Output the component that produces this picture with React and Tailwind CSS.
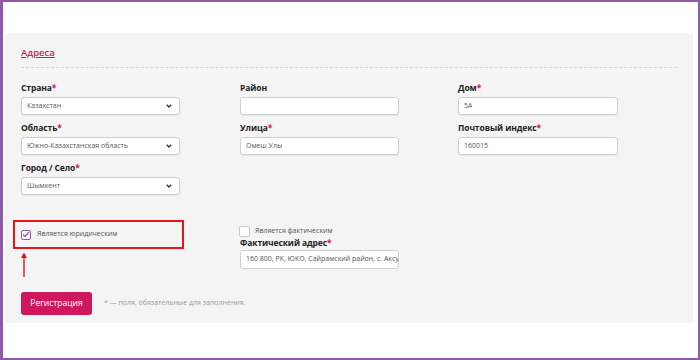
import React from 'react';

const Star = () => <span className="text-[#d4145a]">*</span>;

function Label({ children, req, className = '' }) {
    return (
        <div className={`h-[16px] leading-[16px] text-[8.5px] font-bold text-[#222] tracking-[-0.1px] ${className}`}>
            {children}
            {req && <Star />}
        </div>
    );
}

function Field({ label, req, value, select }) {
    return (
        <div className="mb-[5px]">
            <Label req={req}>{label}</Label>
            <div className="mt-[1px] h-[18px] bg-white border border-[#cfcfcf] rounded-[3px] flex items-center justify-between pl-[5px] pr-[7px] text-[7px] text-[#555] shadow-[0_1px_1px_rgba(0,0,0,0.06)]">
                <span className="whitespace-nowrap overflow-hidden">{value}</span>
                {select && (
                    <svg width="6" height="4" viewBox="0 0 6 4" className="shrink-0">
                        <path d="M0.8 0.8 L3 3 L5.2 0.8" fill="none" stroke="#333" strokeWidth="1.4" />
                    </svg>
                )}
            </div>
        </div>
    );
}

export default function App() {
    return (
        <div className="w-[700px] h-[360px] bg-white border-[2px] border-l-[3px] border-[#8d5aa5] pt-[31px] pl-[2px] pr-[5px] font-['Open_Sans',sans-serif]">
            <div className="h-[290px] bg-[#f4f4f4] pl-[16px] pr-[16px] pt-[12px]">
                <div className="text-[9.5px] font-semibold text-[#d4145a] underline leading-[16px]">Адреса</div>
                <div className="mt-[6px] border-t border-dashed border-[#d2d2d2]" />

                <div className="mt-[12px] flex">
                    <div className="w-[159px]">
                        <Field label="Страна" req value="Казахстан" select />
                        <Field label="Область" req value="Южно-Казахстанская область" select />
                        <Field label="Город / Село" req value="Шымкент" select />
                    </div>
                    <div className="w-[159px] ml-[60px]">
                        <Field label="Район" value="" />
                        <Field label="Улица" req value="Омеш Улы" />
                    </div>
                    <div className="w-[160px] ml-[59px]">
                        <Field label="Дом" req value="5А" />
                        <Field label="Почтовый индекс" req value="160015" />
                    </div>
                </div>

                <div className="mt-[20px] flex">
                    <div className="w-[159px]">
                        <div className="-ml-[8px] w-[171px] h-[29px] border-2 border-[#e8141c] flex items-center pl-[6px] gap-[6px]">
                            <span className="w-[10px] h-[10px] border border-[#8d5aa5] rounded-[2px] bg-white flex items-center justify-center">
                                <svg width="8" height="7" viewBox="0 0 8 7">
                                    <path d="M1 3.5 L3 5.5 L7 1" fill="none" stroke="#8d5aa5" strokeWidth="1.3" />
                                </svg>
                            </span>
                            <span className="text-[7px] text-[#555]">Является юридическим</span>
                        </div>
                        <svg width="10" height="26" viewBox="0 0 10 26" className="mt-[3px] ml-[-2px]">
                            <path d="M5 4 L5 25" stroke="#e8141c" strokeWidth="1.4" />
                            <path d="M2 6 L5 0.5 L8 6 Z" fill="#e8141c" />
                        </svg>
                    </div>
                    <div className="w-[159px] ml-[60px] pt-[6px]">
                        <div className="flex items-center gap-[5px] h-[11px] -ml-[1px]">
                            <span className="w-[11px] h-[11px] border border-[#c8c8c8] rounded-[2px] bg-white" />
                            <span className="text-[7px] text-[#555]">Является фактическим</span>
                        </div>
                        <Label req className="!h-[12px] !leading-[12px]">Фактический адрес</Label>
                        <div className="mt-[1px] h-[19px] bg-white border border-[#cfcfcf] rounded-[3px] flex items-center pl-[5px] text-[7px] text-[#555] whitespace-nowrap overflow-hidden">
                            160 800, РК, ЮКО, Сайрамский район, с. Аксу
                        </div>
                    </div>
                </div>

                <div className="mt-[14px] flex items-center">
                    <button className="w-[71px] h-[23px] bg-[#cf175e] text-white text-[8.5px] rounded-[3px]">
                        Регистрация
                    </button>
                    <span className="ml-[12px] text-[7px] text-[#9a9a9a]">* — поля, обязательные для заполнения.</span>
                </div>
            </div>
        </div>
    );
}
